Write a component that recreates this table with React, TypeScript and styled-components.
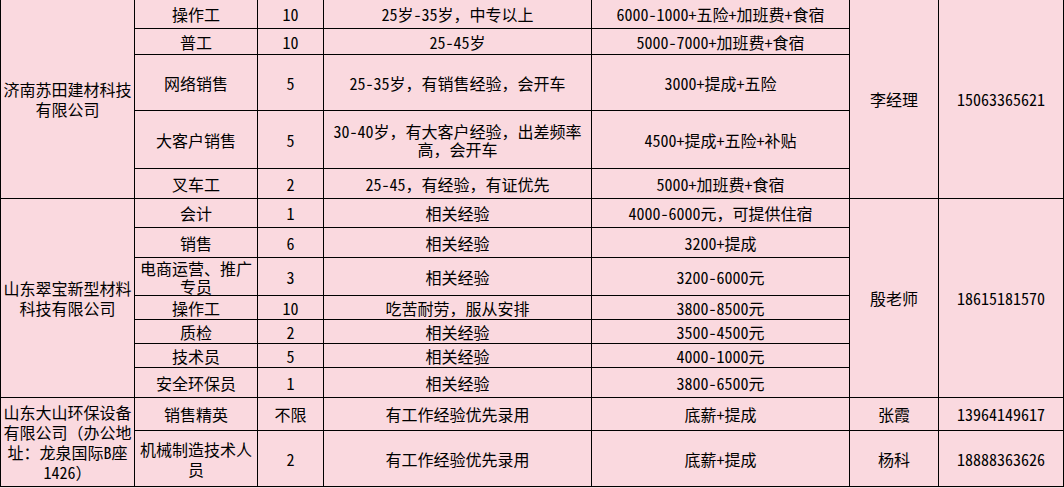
import React from 'react';
import styled, { createGlobalStyle } from 'styled-components';

interface Job {
  title: string[];
  num: string;
  req: string[];
  pay: string;
  h: number;
  tight?: boolean;
}

interface Group {
  company: string[];
  contact: string;
  phone: string;
  jobs: Job[];
}

const groups: Group[] = [
  {
    company: ['济南苏田建材科技', '有限公司'],
    contact: '李经理',
    phone: '15063365621',
    jobs: [
      { title: ['操作工'], num: '10', req: ['25岁-35岁，中专以上'], pay: '6000-1000+五险+加班费+食宿', h: 29 },
      { title: ['普工'], num: '10', req: ['25-45岁'], pay: '5000-7000+加班费+食宿', h: 26 },
      { title: ['网络销售'], num: '5', req: ['25-35岁，有销售经验，会开车'], pay: '3000+提成+五险', h: 56 },
      {
        title: ['大客户销售'],
        num: '5',
        req: ['30-40岁，有大客户经验，出差频率', '高，会开车'],
        pay: '4500+提成+五险+补贴',
        h: 58,
        tight: true,
      },
      { title: ['叉车工'], num: '2', req: ['25-45，有经验，有证优先'], pay: '5000+加班费+食宿', h: 30 },
    ],
  },
  {
    company: ['山东翠宝新型材料', '科技有限公司'],
    contact: '殷老师',
    phone: '18615181570',
    jobs: [
      { title: ['会计'], num: '1', req: ['相关经验'], pay: '4000-6000元，可提供住宿', h: 29 },
      { title: ['销售'], num: '6', req: ['相关经验'], pay: '3200+提成', h: 30 },
      { title: ['电商运营、推广', '专员'], num: '3', req: ['相关经验'], pay: '3200-6000元', h: 38, tight: true },
      { title: ['操作工'], num: '10', req: ['吃苦耐劳，服从安排'], pay: '3800-8500元', h: 24 },
      { title: ['质检'], num: '2', req: ['相关经验'], pay: '3500-4500元', h: 24 },
      { title: ['技术员'], num: '5', req: ['相关经验'], pay: '4000-1000元', h: 24 },
      { title: ['安全环保员'], num: '1', req: ['相关经验'], pay: '3800-6500元', h: 30 },
    ],
  },
  {
    company: ['山东大山环保设备', '有限公司（办公地', '址：龙泉国际B座', '1426）'],
    contact: '',
    phone: '',
    jobs: [
      { title: ['销售精英'], num: '不限', req: ['有工作经验优先录用'], pay: '底薪+提成', h: 33 },
      { title: ['机械制造技术人', '员'], num: '2', req: ['有工作经验优先录用'], pay: '底薪+提成', h: 56 },
    ],
  },
];

// the last company has one contact per job
const lastContacts = [
  { contact: '张霞', phone: '13964149617' },
  { contact: '杨科', phone: '18888363626' },
];

const PINK = '#fad9df';

const GlobalStyle = createGlobalStyle`
  html, body {
    margin: 0;
    padding: 0;
    background: ${PINK};
  }
  body {
    font-family: "Noto Sans CJK SC", "Noto Sans", sans-serif;
    color: #000;
  }
`;

const Sheet = styled.div<{ $rows: string }>`
  display: grid;
  grid-template-columns: 134px 123px 66px 268px 258px 89px 125px;
  grid-template-rows: ${(p) => p.$rows};
  border-left: 1px solid #000;
  width: 1064px;
  box-sizing: border-box;
  background: ${PINK};
`;

const Cell = styled.div<{ $span?: number; $tight?: boolean }>`
  grid-row: span ${(p) => p.$span || 1};
  box-sizing: border-box;
  border-right: 1px solid #000;
  border-bottom: 1px solid #000;
  display: flex;
  flex-direction: column;
  align-items: center;
  justify-content: center;
  text-align: center;
  font-size: 16px;
  line-height: ${(p) => (p.$tight ? '18px' : '20px')};
  white-space: nowrap;
`;

const Line = styled.span`
  display: block;
`;

// latin runs use the font's half-width forms, like the sheet's song-style font
const Latin = styled.span`
  font-feature-settings: 'hwid';
`;

const Text = ({ value }: { value: string }) => (
  <Line>
    {value.split(/([\x20-\x7e]+)/).map((part, i) =>
      /^[\x20-\x7e]+$/.test(part) ? <Latin key={i}>{part}</Latin> : part
    )}
  </Line>
);

const Lines = ({ lines }: { lines: string[] }) => (
  <>
    {lines.map((l, i) => (
      <Text key={i} value={l} />
    ))}
  </>
);

export default function App() {
  const rows = groups
    .flatMap((g) => g.jobs.map((j) => `${j.h}px`))
    .join(' ');

  return (
    <>
      <GlobalStyle />
      <Sheet $rows={rows}>
        {groups.map((g, gi) =>
          g.jobs.map((j, ji) => {
            const last = gi === groups.length - 1;
            return (
              <React.Fragment key={`${gi}-${ji}`}>
                {ji === 0 && (
                  <Cell $span={g.jobs.length}>
                    <Lines lines={g.company} />
                  </Cell>
                )}
                <Cell $tight={j.tight && j.title.length > 1}>
                  <Lines lines={j.title} />
                </Cell>
                <Cell>
                  <Text value={j.num} />
                </Cell>
                <Cell $tight={j.tight && j.req.length > 1}>
                  <Lines lines={j.req} />
                </Cell>
                <Cell>
                  <Text value={j.pay} />
                </Cell>
                {last ? (
                  <>
                    <Cell>{lastContacts[ji].contact}</Cell>
                    <Cell>
                      <Text value={lastContacts[ji].phone} />
                    </Cell>
                  </>
                ) : (
                  ji === 0 && (
                    <>
                      <Cell $span={g.jobs.length}>{g.contact}</Cell>
                      <Cell $span={g.jobs.length}>
                        <Text value={g.phone} />
                      </Cell>
                    </>
                  )
                )}
              </React.Fragment>
            );
          })
        )}
      </Sheet>
    </>
  );
}
